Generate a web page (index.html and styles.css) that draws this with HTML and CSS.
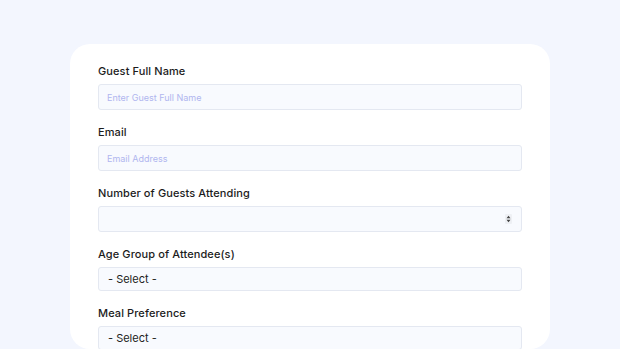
FILE: index.html
```html
<!DOCTYPE html>
<html>
<head>
<meta charset="utf-8">
<link rel="stylesheet" href="styles.css">
</head>
<body>
<div class="page">
  <form class="card">
    <div class="field">
      <label class="label">Guest Full Name</label>
      <input class="input" type="text" placeholder="Enter Guest Full Name">
    </div>
    <div class="field">
      <label class="label">Email</label>
      <input class="input" type="email" placeholder="Email Address">
    </div>
    <div class="field">
      <label class="label">Number of Guests Attending</label>
      <div class="input num">
        <span class="spin"><svg width="5" height="8" viewBox="0 0 5 8"><path d="M2.5 0.8 L4.5 3.2 L0.5 3.2 Z M2.5 7.2 L4.5 4.8 L0.5 4.8 Z" fill="#444"/></svg></span>
      </div>
    </div>
    <div class="field">
      <label class="label">Age Group of Attendee(s)</label>
      <div class="input select">- Select -</div>
    </div>
    <div class="field">
      <label class="label">Meal Preference</label>
      <div class="input select">- Select -</div>
    </div>
  </form>
</div>
</body>
</html>
```
FILE: styles.css
```css
html, body {
  margin: 0;
  padding: 0;
  background: #f3f6fe;
  font-family: "Inter", "Liberation Sans", sans-serif;
}
.page {
  padding-top: 44px;
  display: flex;
  justify-content: center;
  height: 305px;
  overflow: hidden;
}
.card {
  width: 424px;
  background: #ffffff;
  border-radius: 20px;
  padding: 20px 28px 40px;
  margin: 0;
}
.field {
  display: flex;
  flex-direction: column;
  margin-bottom: 15px;
}
.label {
  font-size: 11px;
  font-weight: 500;
  line-height: 14px;
  color: #1c1c1c;
  margin-bottom: 6px;
  letter-spacing: 0.1px;
}
.input {
  box-sizing: border-box;
  height: 26px;
  width: 100%;
  border: 1px solid #e4e8f1;
  border-radius: 3px;
  background: #f8fafe;
  padding: 0 8px;
  font-family: "Inter", "Liberation Sans", sans-serif;
  font-size: 9px;
  outline: none;
  margin: 0;
}
.input::placeholder {
  color: #b0b6ef;
}
.num {
  display: flex;
  align-items: center;
  justify-content: flex-end;
  padding-right: 9px;
}
.spin {
  display: flex;
  background: #eef0f4;
  padding: 1px 1px;
  border-radius: 1px;
}
.select {
  height: 24px;
  display: flex;
  align-items: center;
  font-size: 11px;
  color: #222;
  padding-left: 9px;
}
```
